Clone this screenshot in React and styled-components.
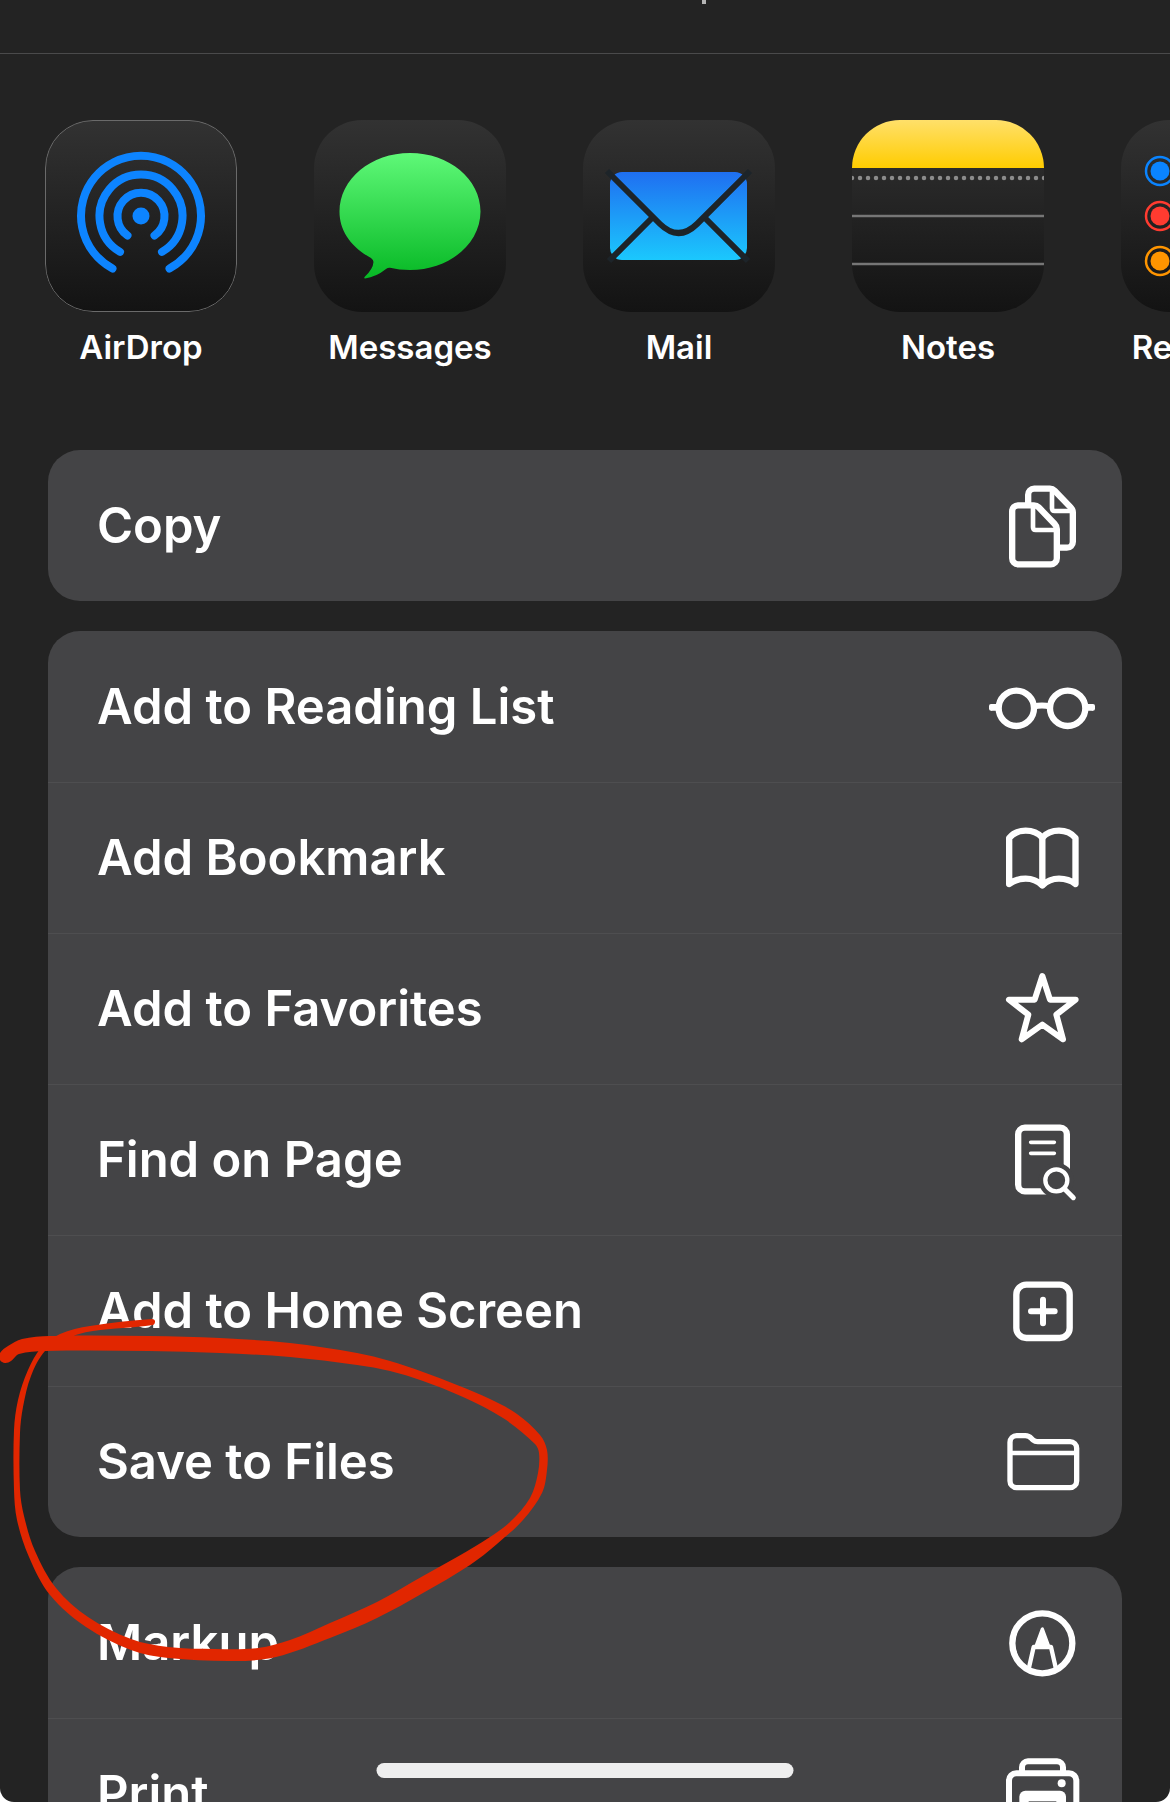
import React from "react";
import styled, { createGlobalStyle } from "styled-components";

const CARD = "#444446";

const GlobalStyle = createGlobalStyle`
  * { box-sizing: border-box; }
  body {
    margin: 0;
    background: #ffffff;
    font-family: Inter, "Liberation Sans", sans-serif;
    -webkit-font-smoothing: antialiased;
  }
  button {
    margin: 0;
    padding: 0;
    border: 0;
    background: none;
    color: inherit;
    font: inherit;
    cursor: pointer;
  }
  svg { display: block; }
`;

const Sheet = styled.main`
  position: relative;
  height: 100vh;
  overflow: hidden;
  background: #232323;
  color: #ffffff;
  border-radius: 0 0 14px 14px;
`;

const Header = styled.header`
  height: 54px;
  padding-left: 60%;
  border-bottom: 1px solid #4a4a4b;
`;

const DescenderTail = styled.div`
  width: 4px;
  height: 4px;
  background: #b4b4b4;
`;

const AppRow = styled.nav`
  display: flex;
  gap: 77px;
  padding: 66px 0 83px 45px;
  overflow: hidden;
`;

const AppButton = styled.button`
  display: flex;
  flex: 0 0 192px;
  flex-direction: column;
  align-items: center;
  gap: 15px;
`;

const Tile = styled.span`
  position: relative;
  width: 192px;
  height: 192px;
  border-radius: 48px;
  overflow: hidden;
  background: linear-gradient(#323232, #131313);

  &::after {
    content: "";
    position: absolute;
    inset: 0;
    border-radius: inherit;
    border: ${(p) => (p.$outlined ? "1px solid #6a6a6a" : "0")};
  }
`;

const AppLabel = styled.span`
  font-size: 33px;
  font-weight: 600;
  line-height: 40px;
  white-space: nowrap;
`;

const Actions = styled.div`
  display: flex;
  flex-direction: column;
  gap: 30px;
  padding: 0 48px;
`;

const Card = styled.section`
  display: flex;
  flex-direction: column;
  border-radius: 32px;
  overflow: hidden;
  background: ${CARD};
`;

const Action = styled.button`
  display: flex;
  align-items: center;
  justify-content: space-between;
  height: 151px;
  padding: 0 20px 0 49px;
  border-top: 1px solid #4e4e50;
  text-align: left;

  &:first-child { border-top-color: transparent; }
`;

const ActionLabel = styled.span`
  font-size: 49px;
  font-weight: 600;
  line-height: 60px;
  white-space: nowrap;
`;

const Glyph = styled.svg.attrs({
  viewBox: "-180 -150 360 300",
  "aria-hidden": true,
})`
  flex: none;
  width: 120px;
  height: 100px;
  fill: none;
  stroke: #ffffff;
  stroke-width: 19;
  stroke-linecap: round;
  stroke-linejoin: round;
`;

const Ink = styled.svg`
  position: absolute;
  left: 0;
  top: 1300px;
  width: 560px;
  height: 380px;
  fill: #e12600;
  pointer-events: none;
`;

const HomeIndicator = styled.div`
  position: absolute;
  left: 50%;
  bottom: 24px;
  width: 417px;
  height: 15px;
  border-radius: 8px;
  background: #eeeeee;
  transform: translateX(-50%);
`;

/* App tiles, drawn on a 192 x 192 grid */

const AirDropArt = () => (
  <svg width="192" height="192" viewBox="0 0 192 192" aria-hidden="true">
    <g fill="none" stroke="#0d84ff" strokeWidth="8" strokeLinecap="round">
      <path d="M67.500 148.500A60 60 0 1 1 124.500 148.500" />
      <path d="M75 131.900A41.500 41.500 0 1 1 117 131.900" />
      <path d="M82.500 115.500A23.500 23.500 0 1 1 109.500 115.500" />
    </g>
    <circle cx="96" cy="96" r="8.500" fill="#0d84ff" />
  </svg>
);

const MessagesArt = () => (
  <svg width="192" height="192" viewBox="0 0 192 192" aria-hidden="true">
    <defs>
      <linearGradient id="bubble" x1="0" y1="33" x2="0" y2="158" gradientUnits="userSpaceOnUse">
        <stop offset="0" stopColor="#5ff878" />
        <stop offset="1" stopColor="#07b925" />
      </linearGradient>
    </defs>
    <path
      fill="url(#bubble)"
      d="M96 33C135 33 166.500 59 166.500 91.500C166.500 124 135 150 96 150Q85 150 76 147.800Q74 147.500 72 149Q62 157 51 158.500Q49.500 158 51 156.500Q59 149 59.500 142Q59.500 140 57 138C37 127 25.500 111 25.500 91.500C25.500 59 57 33 96 33Z"
    />
  </svg>
);

const MailArt = () => (
  <svg width="192" height="192" viewBox="0 0 192 192" aria-hidden="true">
    <defs>
      <linearGradient id="envelope" x1="0" y1="52" x2="0" y2="140" gradientUnits="userSpaceOnUse">
        <stop offset="0" stopColor="#1f6ff1" />
        <stop offset="1" stopColor="#1bc8fd" />
      </linearGradient>
    </defs>
    <rect x="27" y="52" width="137" height="88" rx="12" fill="url(#envelope)" />
    <g fill="none" stroke="#1d2429" strokeWidth="6">
      <path d="M24 51L77 104Q95.500 122 114 104L167 51" />
      <path d="M26 141L69 98M165 141L122 98" />
    </g>
  </svg>
);

const NotesArt = () => (
  <svg width="192" height="192" viewBox="0 0 192 192" aria-hidden="true">
    <defs>
      <linearGradient id="binding" x1="0" y1="0" x2="0" y2="1">
        <stop offset="0" stopColor="#ffe06a" />
        <stop offset="1" stopColor="#ffcc00" />
      </linearGradient>
    </defs>
    <rect width="192" height="48" fill="url(#binding)" />
    <path d="M0 58H193" stroke="#8b8b8b" strokeWidth="4.500" strokeLinecap="round" strokeDasharray="0 8" />
    <path d="M0 96H192M0 144H192" stroke="#767676" strokeWidth="2.500" />
  </svg>
);

const RemindersArt = () => (
  <svg width="192" height="192" viewBox="0 0 192 192" aria-hidden="true">
    {[["#0a84ff", 51], ["#ff3b30", 96], ["#ff9500", 141]].map(([color, y]) => (
      <g key={color}>
        <circle cx="39" cy={y} r="14" fill="none" stroke={color} strokeWidth="2.500" />
        <circle cx="39" cy={y} r="9.500" fill={color} />
        <path d={`M72 ${y}H192`} stroke="#737373" strokeWidth="2" />
      </g>
    ))}
  </svg>
);

/* Action glyphs, drawn around the centre of a 360 x 300 grid */

const CopyGlyph = () => (
  <Glyph>
    <path strokeLinecap="butt" d="M-41.500 -62V-94a18 18 0 0 1 18 -18H24Q32 -112 38 -106L86 -56Q92.500 -49 92.500 -41V47a18 18 0 0 1 -18 18H48" />
    <path strokeWidth="14" d="M30 -108V-53q0 8 8 8H88" />
    <path d="M-71.500 -62H-24Q-16 -62 -10 -56L38 -6Q44.500 1 44.500 9V97a18 18 0 0 1 -18 18H-71.500a18 18 0 0 1 -18 -18V-44a18 18 0 0 1 18 -18Z" />
    <path strokeWidth="14" d="M-27 -58V4q0 8 8 8H40" />
  </Glyph>
);

const GlassesGlyph = () => (
  <Glyph>
    <circle cx="-77" cy="4" r="53" />
    <circle cx="77" cy="4" r="53" />
    <path strokeWidth="18" strokeLinecap="butt" d="M-25 -1Q0 -8 25 -1" />
    <path strokeWidth="12" d="M-153 -3V5M153 -3V5" />
    <path strokeWidth="20" strokeLinecap="butt" d="M-153 1H-128M153 1H128" />
  </Glyph>
);

const BookGlyph = () => (
  <Glyph>
    <path d="M1 -61Q-18 -82 -49 -82Q-80 -82 -98.500 -60V78Q-78 62 -49 62Q-20 62 1 82Q22 62 51 62Q80 62 100.500 78V-60Q82 -82 51 -82Q20 -82 1 -61Z" />
    <path d="M1 -61V80" />
  </Glyph>
);

const StarGlyph = () => (
  <Glyph>
    <path strokeWidth="18" d="M1 -99L24 -28H101L43 17L63 91L1 47L-61 91L-41 17L-99 -28H-22Z" />
  </Glyph>
);

const FindGlyph = () => (
  <Glyph>
    <rect x="-71.500" y="-97" width="146" height="191" rx="20" />
    <path strokeWidth="11" d="M-34 -53H37M-34 -20H37" />
    <circle cx="43" cy="61" r="53" fill={CARD} stroke="none" />
    <circle cx="43" cy="61" r="33" strokeWidth="13" />
    <path strokeWidth="15" d="M67 86L94 113" />
  </Glyph>
);

const PlusGlyph = () => (
  <Glyph>
    <rect x="-77" y="-79" width="160" height="160" rx="30" />
    <path strokeWidth="18" d="M-33 1H38M3 -34V37" />
  </Glyph>
);

const FolderGlyph = () => (
  <Glyph>
    <path strokeWidth="16" d="M-96 -59a20 20 0 0 1 20 -20H-50C-36 -79 -34 -72 -27 -66Q-21 -61 -13 -61H84a20 20 0 0 1 20 20V57a20 20 0 0 1 -20 20H-76a20 20 0 0 1 -20 -20Z" />
    <path strokeWidth="14" strokeLinecap="butt" d="M-96 -27H104" />
  </Glyph>
);

const MarkupGlyph = () => (
  <Glyph>
    <circle cx="1" cy="1" r="90" />
    <path fill="#ffffff" strokeWidth="10" d="M1 -42L-18 10H20Z" />
    <path strokeWidth="13" strokeLinecap="butt" d="M-40 78L-25 12H27L42 78" />
  </Glyph>
);

const PrinterGlyph = () => (
  <Glyph>
    <path strokeLinecap="butt" strokeWidth="18" d="M-60 -62V-80a18 18 0 0 1 18 -18H45a18 18 0 0 1 18 18V-62" />
    <rect x="-99" y="-62" width="202" height="130" rx="22" strokeWidth="18" />
    <circle cx="59" cy="-32" r="12" fill="#ffffff" stroke="none" />
    <rect x="-68" y="-10" width="140" height="120" rx="18" fill="#ffffff" stroke="none" />
    <rect x="-40" y="22" width="83" height="66" fill={CARD} stroke="none" />
  </Glyph>
);

/* Hand-drawn loop: far edge of the ribbon, then the near edge back to the start */

const INK_EDGE = [
  [0, 1353], [8, 1346], [22, 1339], [50, 1336], [149, 1336], [220, 1338], [290, 1343],
  [357, 1353], [390, 1361], [423, 1372], [457, 1385], [490, 1399], [517, 1414],
  [540, 1435], [547, 1450], [547, 1470], [542, 1493], [523, 1520], [497, 1544],
  [470, 1565], [423, 1593], [377, 1618], [330, 1638], [276, 1657],
  [235, 1661], [168, 1658], [131, 1650], [86, 1627], [50, 1595], [29, 1557],
  [17, 1520], [14, 1490], [14, 1430], [18, 1400], [28, 1370], [41, 1348],
  [60, 1334], [90, 1326], [152, 1319], [155, 1321], [153, 1325], [93, 1331],
  [64, 1339], [45, 1351], [31, 1376], [23, 1407], [20, 1433], [20, 1490],
  [24, 1516], [35, 1551], [56, 1588], [88, 1617], [131, 1639], [168, 1647],
  [215, 1649], [258, 1648], [290, 1640], [330, 1623], [377, 1602], [423, 1576],
  [457, 1557], [490, 1537], [510, 1522], [530, 1498], [538, 1473], [539, 1453],
  [535, 1444], [503, 1418], [463, 1397], [423, 1381], [390, 1371], [357, 1365],
  [290, 1357], [220, 1353], [149, 1351], [45, 1351], [19, 1354],
  [11, 1361], [5, 1363], [0, 1360],
];

const smoothPath = (points) => {
  const at = (i) => points[(i + points.length) % points.length];
  const curves = points.map((p, i) => {
    const prev = at(i - 1);
    const next = at(i + 1);
    const after = at(i + 2);
    const reach = Math.hypot(next[0] - p[0], next[1] - p[1]) / 3;
    const toward = (a, b) => {
      const length = Math.hypot(b[0] - a[0], b[1] - a[1]) || 1;
      return [((b[0] - a[0]) / length) * reach, ((b[1] - a[1]) / length) * reach];
    };
    const out = toward(prev, next);
    const into = toward(p, after);
    return `C${p[0] + out[0]} ${p[1] + out[1]} ${next[0] - into[0]} ${next[1] - into[1]} ${next[0]} ${next[1]}`;
  });
  return `M${points[0][0]} ${points[0][1]}${curves.join("")}Z`;
};

const APPS = [
  { label: "AirDrop", Art: AirDropArt, outlined: true },
  { label: "Messages", Art: MessagesArt },
  { label: "Mail", Art: MailArt },
  { label: "Notes", Art: NotesArt },
  { label: "Reminders", Art: RemindersArt },
];

const GROUPS = [
  [["Copy", CopyGlyph]],
  [
    ["Add to Reading List", GlassesGlyph],
    ["Add Bookmark", BookGlyph],
    ["Add to Favorites", StarGlyph],
    ["Find on Page", FindGlyph],
    ["Add to Home Screen", PlusGlyph],
    ["Save to Files", FolderGlyph],
  ],
  [
    ["Markup", MarkupGlyph],
    ["Print", PrinterGlyph],
  ],
];

export default function App() {
  return (
    <>
      <GlobalStyle />
      <Sheet>
        <Header>
          <DescenderTail />
        </Header>
        <AppRow>
          {APPS.map(({ label, Art, outlined }) => (
            <AppButton key={label} type="button">
              <Tile $outlined={outlined}>
                <Art />
              </Tile>
              <AppLabel>{label}</AppLabel>
            </AppButton>
          ))}
        </AppRow>
        <Actions>
          {GROUPS.map((group) => (
            <Card key={group[0][0]}>
              {group.map(([label, Icon]) => (
                <Action key={label} type="button">
                  <ActionLabel>{label}</ActionLabel>
                  <Icon />
                </Action>
              ))}
            </Card>
          ))}
        </Actions>
        <Ink viewBox="0 1300 560 380" aria-hidden="true">
          <path d={smoothPath(INK_EDGE)} />
        </Ink>
        <HomeIndicator />
      </Sheet>
    </>
  );
}
